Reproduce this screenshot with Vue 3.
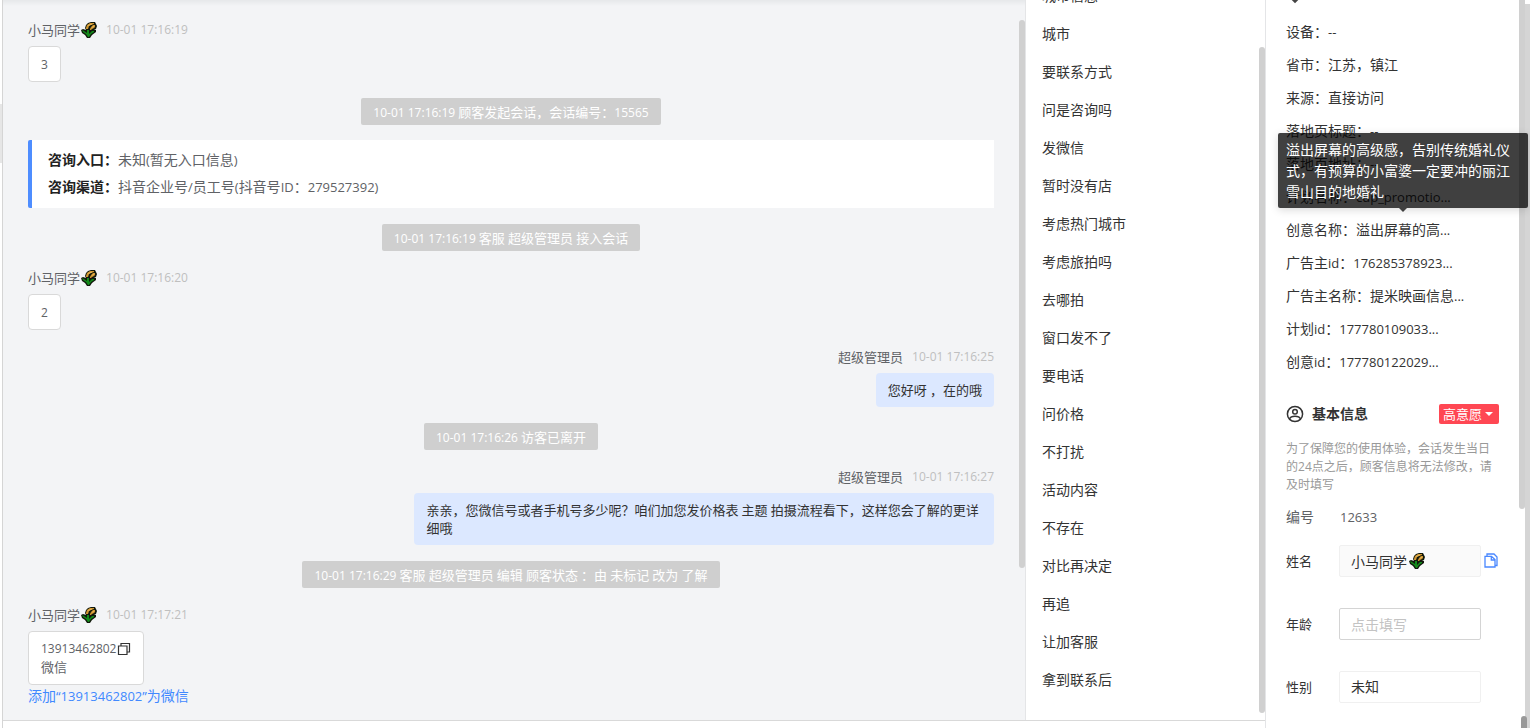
<script setup>
import { h, ref } from 'vue'

const Mixed = (props) =>
  (props.text.match(/[\x20-\x7e“”]+|[^\x20-\x7e“”]+/g) || []).map((part) =>
    /^[\x20-\x7e“”]/.test(part) ? h('span', { class: 'latin' }, part) : part
  )
Mixed.props = ['text']

const svg = (attrs, children) => h('svg', { 'aria-hidden': 'true', ...attrs }, children)

const Wheat = () =>
  svg({ class: 'wheat', viewBox: '0 0 16 16', width: 16, height: 16 }, [
    h('path', { d: 'M4 6L5 3L7 1L10 0H14L15 2L16 4L15 7L13 8L15 8V10L11 13L9 16H6L4 13L1 11L0 8L2 7L5 8Z', fill: '#11180b' }),
    h('path', { d: 'M1 8L3 9L6 11V8H8V12L11 9L13 9V10L10 12L8 15H7L5 12L2 10Z', fill: '#128a1a' }),
    h('path', { d: 'M5 6L6 3L9 1H13V2L10 3L8 4L7 7H5ZM9 7L10 5L12 3H14V5L13 6L11 7L10 8H9Z', fill: '#cf9530' }),
    h('path', { d: 'M7 3.500L11 2M11 5.500L13 4', stroke: '#e6b658', fill: 'none' })
  ])

const feed = [
  { kind: 'guest', time: '10-01 17:16:19', text: '3' },
  { kind: 'event', text: '10-01 17:16:19 顾客发起会话，会话编号：15565' },
  { kind: 'card' },
  { kind: 'event', text: '10-01 17:16:19 客服 超级管理员 接入会话' },
  { kind: 'guest', time: '10-01 17:16:20', text: '2' },
  { kind: 'staff', time: '10-01 17:16:25', text: '您好呀 ，在的哦' },
  { kind: 'event', text: '10-01 17:16:26 访客已离开' },
  { kind: 'staff', time: '10-01 17:16:27', text: '亲亲，您微信号或者手机号多少呢？咱们加您发价格表 主题 拍摄流程看下，这样您会了解的更详细哦' },
  { kind: 'event', text: '10-01 17:16:29 客服 超级管理员 编辑 顾客状态 ：由 未标记 改为 了解' },
  { kind: 'guest', time: '10-01 17:17:21', phone: '13913462802', text: '微信' }
]

const topics = ['城市信息', '城市', '要联系方式', '问是咨询吗', '发微信', '暂时没有店', '考虑热门城市', '考虑旅拍吗', '去哪拍', '窗口发不了', '要电话', '问价格', '不打扰', '活动内容', '不存在', '对比再决定', '再追', '让加客服', '拿到联系后']

const visit = [
  '设备：--',
  '省市：江苏，镇江',
  '来源：直接访问',
  '落地页标题：--',
  '落地页地址：--',
  '计划名称：cdp_promotio...',
  '创意名称：溢出屏幕的高...',
  '广告主id：176285378923...',
  '广告主名称：提米映画信息...',
  '计划id：177780109033...',
  '创意id：177780122029...'
]
const hovered = 6
const hint = '溢出屏幕的高级感，告别传统婚礼仪式，有预算的小富婆一定要冲的丽江雪山目的地婚礼'

const name = ref('小马同学')
const age = ref('')
const gender = ref('未知')
</script>

<template>
  <div class="app" lang="zh-CN">
    <div class="rail"><i class="rail-handle"></i></div>

    <main class="chat">
      <template v-for="(m, i) in feed" :key="i">
        <div v-if="m.kind === 'event'" class="event"><Mixed :text="m.text" /></div>

        <section v-else-if="m.kind === 'card'" class="card">
          <p><b>咨询入口：</b><Mixed text="未知(暂无入口信息)" /></p>
          <p><b>咨询渠道：</b><Mixed text="抖音企业号/员工号(抖音号ID：279527392)" /></p>
        </section>

        <article v-else class="msg" :class="m.kind">
          <header>
            <span v-if="m.kind === 'guest'" class="who">小马同学<Wheat /></span>
            <span v-else class="who">超级管理员</span>
            <time>{{ m.time }}</time>
          </header>
          <div class="bubble">
            <div v-if="m.phone" class="phone">
              <Mixed :text="m.phone" />
              <button type="button" aria-label="复制">
                <svg viewBox="0 0 14 14" width="14" height="14" fill="none" stroke="#333" stroke-width="1.2">
                  <path d="M1.500 4h8.500v8.500h-8.500zM4 4V1.500h8.500V10H10" />
                </svg>
              </button>
            </div>
            <Mixed :text="m.text" />
          </div>
          <a v-if="m.phone" href="#" class="add"><Mixed :text="`添加“${m.phone}”为微信`" /></a>
        </article>
      </template>
      <i class="thumb chat-thumb"></i>
    </main>

    <nav class="topics">
      <ul>
        <li v-for="t in topics" :key="t"><a href="#">{{ t }}</a></li>
      </ul>
      <i class="thumb topics-thumb"></i>
    </nav>

    <footer class="composer"></footer>

    <aside class="info">
      <i class="tip-end"></i>
      <ul class="visit">
        <li v-for="(v, i) in visit" :key="v">
          <Mixed :text="v" />
          <div v-if="i === hovered" class="tip" role="tooltip">{{ hint }}</div>
        </li>
      </ul>

      <div class="heading">
        <svg viewBox="0 0 18 18" width="18" height="18" fill="none" stroke="#333" stroke-width="1.5">
          <circle cx="9" cy="9" r="7.600" />
          <circle cx="9" cy="6.800" r="2.300" />
          <path d="M3.500 14C4.500 11.500 6 11.200 9 11.200S13.500 11.500 14.500 14" />
        </svg>
        <h2>基本信息</h2>
        <button type="button" class="level">高意愿<i></i></button>
      </div>
      <p class="note"><Mixed text="为了保障您的使用体验，会话发生当日的24点之后，顾客信息将无法修改，请及时填写" /></p>

      <div class="number"><span>编号</span><Mixed text="12633" /></div>
      <form>
        <div class="row">
          <label for="name">姓名</label>
          <div class="field filled">
            <input id="name" v-model="name" type="text" class="name" /><Wheat />
          </div>
          <button type="button" class="copy" aria-label="复制姓名">
            <svg viewBox="0 0 14 16" width="14" height="16" fill="none" stroke="#4a88ff" stroke-width="1.300">
              <path d="M1 3.300h6.500L11 6.500V14H1zM7.300 3.500V7H11M3 3V1h7l3 3v8.500h-2" />
            </svg>
          </button>
        </div>
        <div class="row">
          <label for="age">年龄</label>
          <div class="field open"><input id="age" v-model="age" type="text" placeholder="点击填写" /></div>
        </div>
        <div class="row">
          <label for="gender">性别</label>
          <div class="field">
            <select id="gender" v-model="gender"><option>未知</option><option>男</option><option>女</option></select>
          </div>
        </div>
      </form>
      <i class="thumb info-thumb"></i>
      <i class="page-track"></i>
      <i class="page-thumb"></i>
    </aside>
  </div>
</template>

<style>
body {
  overflow: hidden;
  background: #fff;
}
.latin {
  font-size: var(--latin);
  line-height: 1;
}
.wheat {
  flex: none;
  margin-left: 1px;
}
</style>

<style scoped>
.app {
  --latin: 13px;
  display: grid;
  grid-template-columns: 3px minmax(0, 1fr) 240px 265px;
  grid-template-rows: minmax(0, 1fr) 8px;
  height: 100vh;
  overflow: hidden;
  font: 14px/18px "Open Sans", "Noto Sans CJK SC", sans-serif;
  color: #333;
}
.app * {
  box-sizing: border-box;
}
ul,
p,
h2 {
  margin: 0;
  padding: 0;
  list-style: none;
}
button,
input,
select {
  padding: 0;
  border: 0;
  background: none;
  font: inherit;
  color: inherit;
}
a {
  color: inherit;
  text-decoration: none;
}
.rail {
  grid-row: 1 / 3;
  border-right: 1px solid #d5d5d5;
  padding-top: 104px;
}
.rail-handle {
  display: block;
  height: 59px;
  background: #e6e6e6;
}
.chat {
  --latin: 12px;
  position: relative;
  display: flex;
  flex-direction: column;
  gap: 16px;
  padding: 19px 31px 0 25px;
  overflow: hidden;
  background: linear-gradient(#e6e8ea, #f3f4f6 6px);
  font-size: 13px;
}
.msg {
  display: flex;
  flex-direction: column;
  align-items: flex-start;
}
.msg.staff {
  align-items: flex-end;
}
header {
  display: flex;
  align-items: center;
  gap: 9px;
  height: 21px;
  margin-bottom: 6px;
  color: #606266;
}
.who {
  display: flex;
  align-items: center;
}
time {
  font-size: 12px;
  color: #bfbfbf;
}
.bubble {
  max-width: 60%;
  padding: 8px 12px;
  border-radius: 4px;
  color: #333;
}
.guest .bubble {
  border: 1px solid #d9d9d9;
  background: #fff;
  color: #606266;
}
.staff .bubble {
  background: #dce8ff;
}
.phone {
  display: flex;
  align-items: center;
  gap: 1px;
  height: 18px;
}
.phone button {
  display: flex;
}
.add {
  --latin: 13px;
  margin-top: 2px;
  font-size: 14px;
  color: #4189ff;
}
.event {
  align-self: center;
  height: 27px;
  padding: 0 12px;
  border-radius: 2px;
  background: #cfcfcf;
  line-height: 28px;
  color: #fff;
}
.card {
  --latin: 13px;
  margin-top: -1px;
  padding: 6px 16px 8px;
  border-left: 4px solid #4e8dff;
  border-radius: 2px 0 0 2px;
  background: #fff;
  font-size: 14px;
  line-height: 27px;
  color: #606266;
}
.card b {
  color: #222;
}
.thumb {
  position: absolute;
  right: 0;
  width: 6px;
  border-radius: 3px;
  background: #d0d0d0;
}
.chat-thumb {
  top: 20px;
  height: 548px;
}
.topics {
  position: relative;
  border-left: 1px solid #e4e5e7;
  overflow: hidden;
}
.topics ul {
  margin-top: -23px;
  padding-left: 16px;
  line-height: 38px;
}
.topics-thumb {
  top: 47px;
  bottom: 7px;
}
.composer {
  grid-column: 2 / 4;
  grid-row: 2;
  border-top: 1px solid #d9d9d9;
}
.info {
  position: relative;
  grid-column: 4;
  grid-row: 1 / 3;
  padding: 15px 31px 0 20px;
  border-left: 1px solid #e4e5e7;
}
.tip-end {
  position: absolute;
  top: -4px;
  left: 26px;
  width: 6px;
  height: 6px;
  background: #444;
  transform: rotate(45deg);
}
.visit li {
  position: relative;
  line-height: 33px;
  white-space: nowrap;
}
.tip {
  position: absolute;
  z-index: 2;
  bottom: calc(100% + 5px);
  left: -8px;
  width: 250px;
  padding: 6px 8px;
  border-radius: 2px;
  background: rgba(0, 0, 0, 0.75);
  box-shadow: 0 2px 8px rgba(0, 0, 0, 0.15);
  line-height: 21px;
  white-space: normal;
  color: #fff;
}
.tip::after {
  content: "";
  position: absolute;
  top: 100%;
  left: 50%;
  margin-left: -4px;
  border: 4px solid transparent;
  border-top-color: #404040;
  border-bottom: 0;
}
.heading {
  display: flex;
  align-items: center;
  height: 20px;
  margin-top: 26px;
}
h2 {
  flex: 1;
  margin-left: 8px;
  font-size: 14px;
}
.level {
  display: flex;
  align-items: center;
  gap: 3px;
  height: 20px;
  padding: 0 6px 0 4px;
  border-radius: 2px;
  background: #ff4753;
  font-size: 13px;
  color: #fff;
}
.level i {
  border: 4px solid transparent;
  border-top-color: #fff;
  border-bottom: 0;
}
.note {
  --latin: 12px;
  margin-top: 16px;
  font-size: 12px;
  color: #999;
}
.number {
  display: flex;
  align-items: center;
  margin-top: 14px;
  color: #606266;
}
.number span:first-child {
  width: 54px;
}
form {
  margin-top: 19px;
}
.row {
  display: flex;
  align-items: center;
  height: 32px;
  margin-bottom: 31px;
}
label {
  width: 53px;
  font-size: 13px;
}
.field {
  display: flex;
  align-items: center;
  width: 142px;
  height: 32px;
  padding: 0 11px;
  border: 1px solid #f0f0f0;
  border-radius: 2px;
}
.filled {
  background: #fafafa;
}
.open {
  border-color: #d4d4d4;
}
.field input,
.field select {
  width: 100%;
  height: 30px;
  appearance: none;
  outline: 0;
}
.field .name {
  width: 57px;
}
.field input::placeholder {
  color: #c3c3c3;
  opacity: 1;
}
.copy {
  display: flex;
  margin-left: 3px;
}
.info-thumb {
  top: -4px;
  right: 5px;
  height: 513px;
}
.page-track {
  position: absolute;
  top: 4px;
  right: 0;
  bottom: 0;
  width: 5px;
  background: #d5d5d5;
}
.page-thumb {
  position: absolute;
  right: 3px;
  bottom: 0;
  width: 6px;
  height: 12px;
  border-radius: 3px 3px 0 0;
  background: #999;
}
</style>
